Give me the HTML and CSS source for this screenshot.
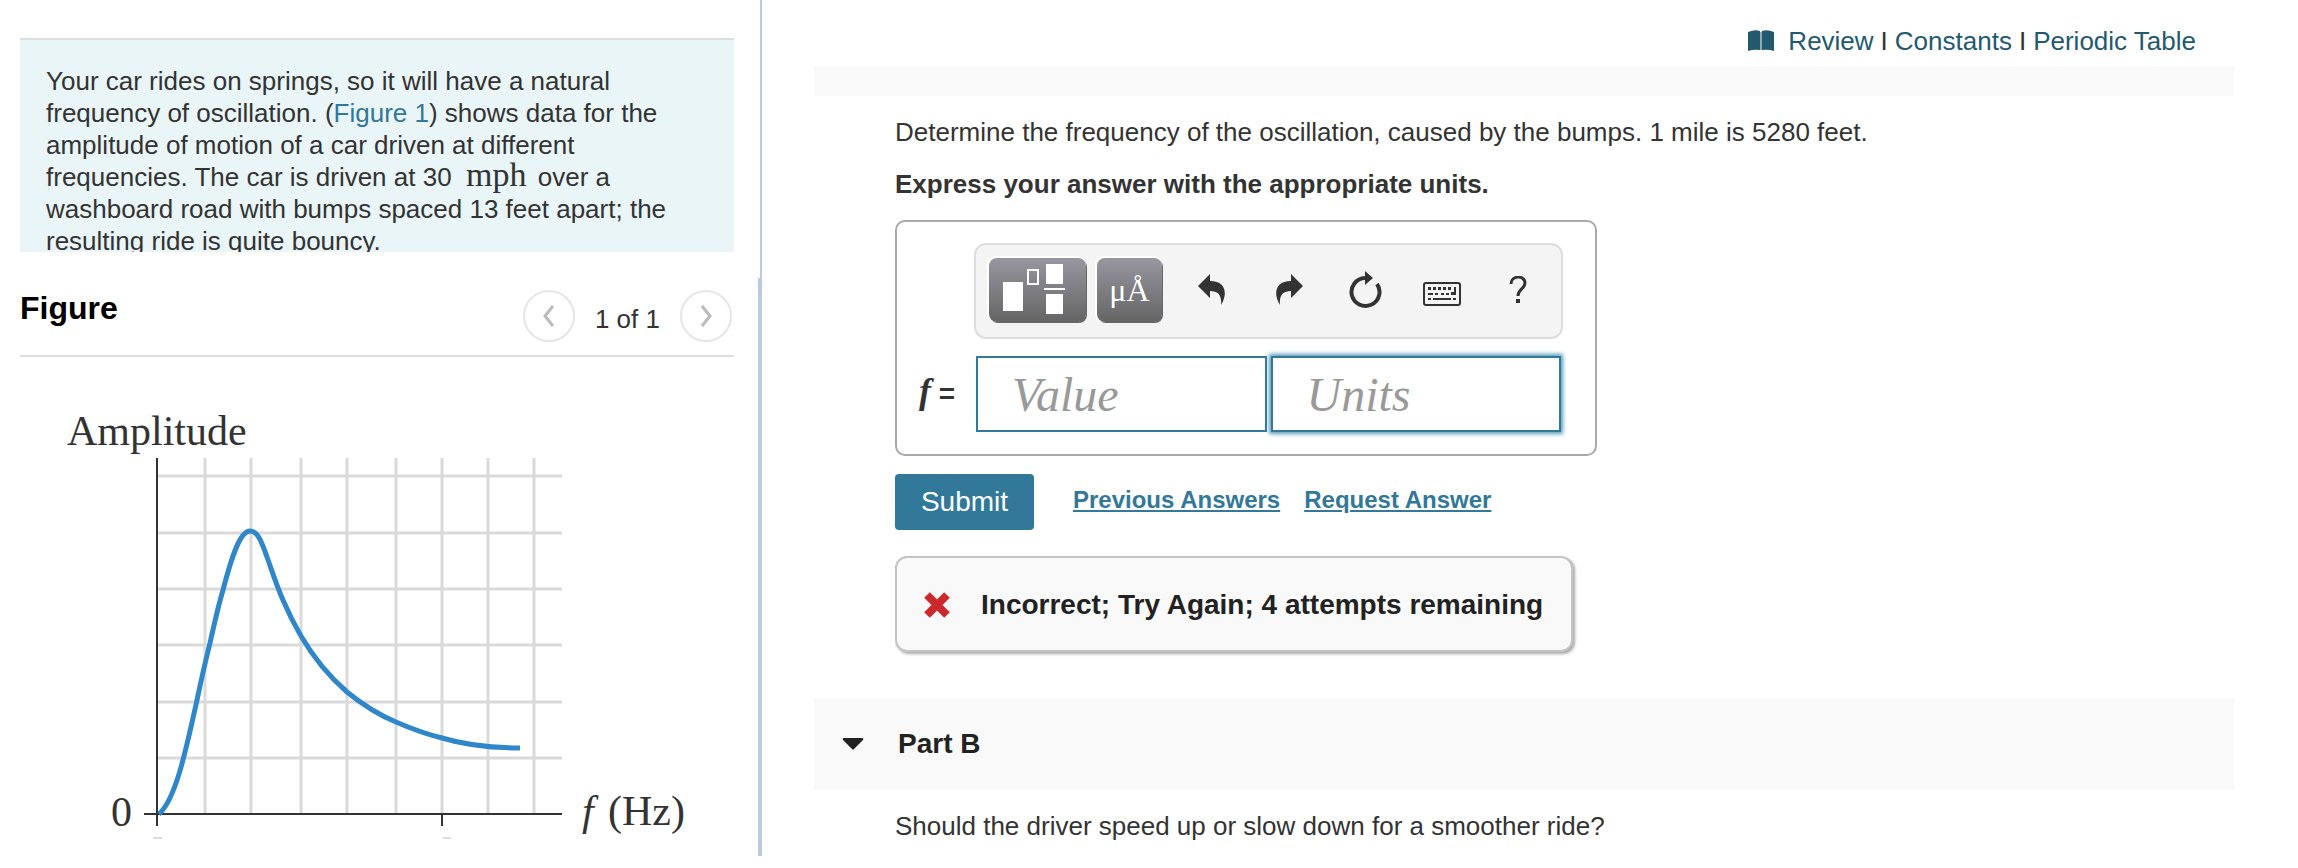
FILE: index.html
```html
<!DOCTYPE html>
<html lang="en">
<head>
    <meta charset="UTF-8">
    <meta name="viewport" content="width=device-width, initial-scale=1.0">
    <title>Car on Springs</title>
    <link rel="stylesheet" href="styles.css">
</head>
<body>
    <div class="page">
        <aside class="sidebar">
            <div class="intro">
                <p>Your car rides on springs, so it will have a natural frequency of oscillation. (<a href="#figure">Figure 1</a>) shows data for the amplitude of motion of a car driven at different frequencies. The car is driven at 30 &nbsp;<span class="unit">mph</span> over a washboard road with bumps spaced 13 feet apart; the resulting ride is quite bouncy.</p>
            </div>

            <div class="figure-header" id="figure">
                <h2>Figure</h2>
                <div class="pager">
                    <button type="button" class="pager-btn" aria-label="Previous figure">
                        <svg width="16" height="24" viewBox="0 0 16 24"><path d="M12 2 L4 12 L12 22"/></svg>
                    </button>
                    <span class="pager-text">1 of 1</span>
                    <button type="button" class="pager-btn" aria-label="Next figure">
                        <svg width="16" height="24" viewBox="0 0 16 24"><path d="M4 2 L12 12 L4 22"/></svg>
                    </button>
                </div>
            </div>

            <svg class="chart" viewBox="20 357 714 490" role="img" aria-label="Amplitude against frequency">
                <g class="grid">
                    <path d="M157 476H562M157 533H562M157 589H562M157 645H562M157 702H562M157 758H562"/>
                    <path d="M205 458V814M251 458V814M301 458V814M347 458V814M396 458V814M442 458V814M488 458V814M534 458V814"/>
                </g>
                <path class="axis" d="M157 458V826M144 814H562"/>
                <path class="tick" d="M442 814V826"/>
                <path class="curve" d="M159 814 C175 800 185 755 197 700 C201 681 205 663 210 643 C214 625 218 607 223 590 C230 563 239 531 250 531 C258 531 262 543 267 557 C272 571 277 587 283 600 C288 612 294 624 301 636 C315 660 331 678 347 692 C363 705 379 715 396 722 C412 729 426 734 442 738 C462 744 492 748 520 748"/>
                <path class="cut" d="M153 838H162M443 838H451"/>
                <text x="67" y="445">Amplitude</text>
                <text x="111" y="826">0</text>
                <text x="582" y="825" font-style="italic">f</text>
                <text x="608" y="825">(Hz)</text>
            </svg>
        </aside>

        <div class="splitter">
            <div class="splitter-top"></div>
            <div class="splitter-bar"></div>
        </div>

        <main class="content">
            <nav class="top-links">
                <svg class="book" width="26" height="22" viewBox="0 0 26 22">
                    <path d="M0 2Q7 -1 12 1V20Q6 19 0 21Z"/>
                    <path d="M26 2Q19 -1 14 1V20Q20 19 26 21Z"/>
                    <path class="spine" d="M12 2H14V20H12Z"/>
                </svg>
                <a href="#">Review</a>
                <span>I</span>
                <a href="#">Constants</a>
                <span>I</span>
                <a href="#">Periodic Table</a>
            </nav>
            <div class="strip"></div>

            <section class="part">
                <p class="question">Determine the frequency of the oscillation, caused by the bumps. 1 mile is 5280 feet.</p>
                <p class="instructions">Express your answer with the appropriate units.</p>

                <form>
                    <div class="answer-box">
                        <div class="toolbar">
                            <button type="button" class="tool-dark tool-wide" aria-label="Templates">
                                <svg width="97" height="66" viewBox="0 0 97 66">
                                    <path fill="#fff" d="M14 24H34V53H14ZM57 6H74V26H57ZM57 36H74V56H57ZM55 30H76V32H55Z"/>
                                    <path fill="none" stroke="#fff" stroke-width="2" d="M39 12H49V26H39Z"/>
                                </svg>
                            </button>
                            <button type="button" class="tool-dark" aria-label="Units">&mu;Å</button>
                            <div class="tool-icons">
                                <button type="button" class="tool" aria-label="Undo">
                                    <svg width="28" height="32" viewBox="0 0 28 32"><path d="M0 12 L12 0 V7 C28 7 30 20 23 31 C24 21 20 17 12 17 V24 Z"/></svg>
                                </button>
                                <button type="button" class="tool" aria-label="Redo">
                                    <svg width="28" height="32" viewBox="0 0 28 32"><path d="M28 12 L16 0 V7 C0 7 -2 20 5 31 C4 21 8 17 16 17 V24 Z"/></svg>
                                </button>
                                <button type="button" class="tool" aria-label="Reset">
                                    <svg width="34" height="38" viewBox="0 0 34 38">
                                        <path fill="none" stroke="#333" stroke-width="4" d="M17 7 A14 14 0 1 0 29 13"/>
                                        <path d="M17 0 L25 7 L17 14 Z"/>
                                    </svg>
                                </button>
                                <button type="button" class="tool tool-low" aria-label="Keyboard">
                                    <svg width="38" height="24" viewBox="0 0 38 24">
                                        <rect x="1" y="1" width="36" height="22" rx="2" fill="none" stroke="#333" stroke-width="2"/>
                                        <path d="M5 5h3v3h-3zM10 5h3v3h-3zM15 5h3v3h-3zM20 5h3v3h-3zM25 5h3v3h-3zM31 5h2v8h-5v-3h3zM5 11h5v2h-5zM12 11h3v2h-3zM18 11h3v2h-3zM23 11h3v2h-3zM5 16h3v2h-3zM10 16h18v2h-18zM30 16h3v2h-3z"/>
                                    </svg>
                                </button>
                                <button type="button" class="tool" aria-label="Help">
                                    <svg width="18" height="28" viewBox="0 0 18 28">
                                        <path fill="none" stroke="#333" stroke-width="3" d="M2 8 C2 -1 16 -1 16 7 C16 13 9 13 9 20"/>
                                        <path d="M7 23H11V27H7Z"/>
                                    </svg>
                                </button>
                            </div>
                        </div>
                        <div class="answer-row">
                            <label for="value"><i>f</i> =</label>
                            <input type="text" id="value" class="field" placeholder="Value">
                            <input type="text" id="units" class="field field-focus" placeholder="Units" aria-label="Units">
                        </div>
                    </div>

                    <div class="actions">
                        <button type="submit" class="submit">Submit</button>
                        <a href="#">Previous Answers</a>
                        <a href="#">Request Answer</a>
                    </div>
                </form>

                <div class="feedback">
                    <svg width="28" height="28" viewBox="0 0 28 28"><path d="M4 4L24 24M24 4L4 24"/></svg>
                    <span>Incorrect; Try Again; 4 attempts remaining</span>
                </div>
            </section>

            <div class="part-header">
                <svg width="22" height="12" viewBox="0 0 22 12"><path d="M2 0H20Q22 0 21 2L12 11Q11 12 10 11L1 2Q0 0 2 0Z"/></svg>
                <h2>Part B</h2>
            </div>
            <section class="part">
                <p class="question">Should the driver speed up or slow down for a smoother ride?</p>
            </section>
        </main>
    </div>
</body>
</html>
```
FILE: styles.css
```css
* {
    margin: 0;
    padding: 0;
    box-sizing: border-box;
}

body {
    background-color: white;
    color: #333;
    font-family: "Liberation Sans", Arial, sans-serif;
    font-size: 26px;
    line-height: 32px;
}

a {
    color: #317899;
    text-decoration: none;
}

button {
    border: none;
    font-family: inherit;
    cursor: pointer;
}

.page {
    display: grid;
    grid-template-columns: minmax(0, 758fr) 4px minmax(0, 1536fr);
    min-height: 100vh;
    padding-bottom: 12px;
}

/* left pane */
.sidebar {
    padding: 38px 24px 0 20px;
}

.intro {
    height: 214px;
    padding: 25px 26px 0;
    border-top: 2px solid #dedede;
    background-color: #eaf5f7;
    overflow: hidden;
}

.unit {
    margin-right: 4px;
    font-family: "Liberation Serif", serif;
    font-size: 34px;
    line-height: 24px;
}

.figure-header {
    display: flex;
    justify-content: space-between;
    height: 105px;
    padding: 38px 2px 0 0;
    border-bottom: 2px solid #dedede;
}

.figure-header h2 {
    color: #000;
    font-size: 32px;
    line-height: 36px;
}

.pager {
    display: flex;
    align-items: center;
    gap: 20px;
    height: 52px;
}

.pager-btn {
    display: flex;
    align-items: center;
    justify-content: center;
    width: 52px;
    height: 52px;
    border: 2px solid #e6e6e6;
    border-radius: 50%;
    background-color: white;
}

.pager-btn path {
    fill: none;
    stroke: #bbb;
    stroke-width: 3;
}

.pager-text {
    padding-top: 6px;
}

.chart {
    display: block;
    width: 100%;
    font-family: "Liberation Serif", serif;
    font-size: 42px;
    fill: #333;
}

.grid {
    stroke: #dadada;
    stroke-width: 3;
}

.axis,
.tick {
    fill: none;
    stroke: #333;
    stroke-width: 2;
}

.curve {
    fill: none;
    stroke: #2f86c9;
    stroke-width: 5;
}

.cut {
    stroke: #bbb;
    stroke-width: 1;
}

.splitter {
    display: flex;
    flex-direction: column;
    align-items: flex-end;
}

.splitter-top {
    width: 2px;
    height: 278px;
    background-color: #bccadd;
}

.splitter-bar {
    flex: 1;
    width: 4px;
    background-color: #bccadd;
}

/* right pane */
.content {
    padding: 0 64px 0 52px;
}

.top-links {
    display: flex;
    align-items: center;
    justify-content: flex-end;
    gap: 7px;
    height: 66px;
    padding: 16px 38px 0 0;
}

.top-links a {
    color: #22596f;
}

.book {
    margin-right: 7px;
    fill: #22596f;
}

.book .spine {
    fill: #8fabb7;
}

.strip {
    height: 30px;
    background-color: #f9f9f9;
}

.part {
    padding: 20px 0 0 81px;
}

.instructions {
    margin-top: 20px;
    font-weight: bold;
}

.answer-box {
    width: 702px;
    max-width: 100%;
    margin-top: 20px;
    padding: 21px 32px 22px 16px;
    border: 2px solid #a9a9a9;
    border-radius: 10px;
}

.toolbar {
    display: flex;
    align-items: center;
    gap: 11px;
    height: 96px;
    margin-left: 61px;
    padding: 0 20px 2px 13px;
    border: 2px solid #ddd;
    border-radius: 12px;
    background-color: #f4f4f4;
}

.tool-dark {
    width: 65px;
    height: 64px;
    border-radius: 8px;
    background-image: linear-gradient(#9896a0, #656565);
    box-shadow: -1px -1px 0 1px #fff, 1px 1px 0 #666;
    color: white;
    font-family: "Liberation Serif", serif;
    font-size: 32px;
}

.tool-wide {
    width: 97px;
}

.tool-icons {
    display: flex;
    flex: 1;
    align-items: center;
    justify-content: space-between;
    padding-left: 16px;
}

.tool {
    display: flex;
    align-items: center;
    justify-content: center;
    width: 46px;
    height: 46px;
    background-color: transparent;
    fill: #333;
}

.tool-low {
    padding-top: 8px;
}

.answer-row {
    display: flex;
    align-items: center;
    gap: 4px;
    margin-top: 17px;
    padding-right: 2px;
}

.answer-row label {
    flex: 0 0 59px;
    padding: 0 0 4px 6px;
    font-size: 28px;
    font-weight: bold;
}

.answer-row i {
    font-family: "Liberation Serif", serif;
    font-size: 36px;
}

.field {
    flex: 1;
    min-width: 0;
    height: 76px;
    padding: 0 34px;
    border: 2px solid #317899;
    font-family: "Liberation Serif", serif;
    font-size: 48px;
    font-style: italic;
}

.field::placeholder {
    color: #999;
}

.field-focus {
    box-shadow: 0 0 4px 2px #5a9dbb;
}

.actions {
    display: flex;
    align-items: center;
    gap: 24px;
    margin-top: 18px;
}

.actions a {
    padding-bottom: 4px;
    font-size: 24px;
    font-weight: bold;
    text-decoration: underline;
}

.submit {
    width: 139px;
    height: 56px;
    margin-right: 15px;
    border-radius: 4px;
    background-color: #317899;
    color: white;
    font-size: 28px;
}

.feedback {
    display: flex;
    align-items: center;
    gap: 30px;
    width: fit-content;
    height: 96px;
    margin-top: 26px;
    padding: 2px 28px 0 26px;
    border: 2px solid #c4c4c4;
    border-radius: 12px;
    background-color: #f9f9f9;
    box-shadow: 2px 2px 3px #aaa;
    color: #222;
    font-size: 28px;
    font-weight: bold;
}

.feedback path {
    fill: none;
    stroke: #cb2a2d;
    stroke-width: 8;
}

.part-header {
    display: flex;
    align-items: center;
    gap: 34px;
    height: 92px;
    margin-top: 46px;
    padding-left: 28px;
    background-color: #f9f9f9;
    color: #222;
    fill: #222;
}

.part-header h2 {
    font-size: 28px;
}
```
